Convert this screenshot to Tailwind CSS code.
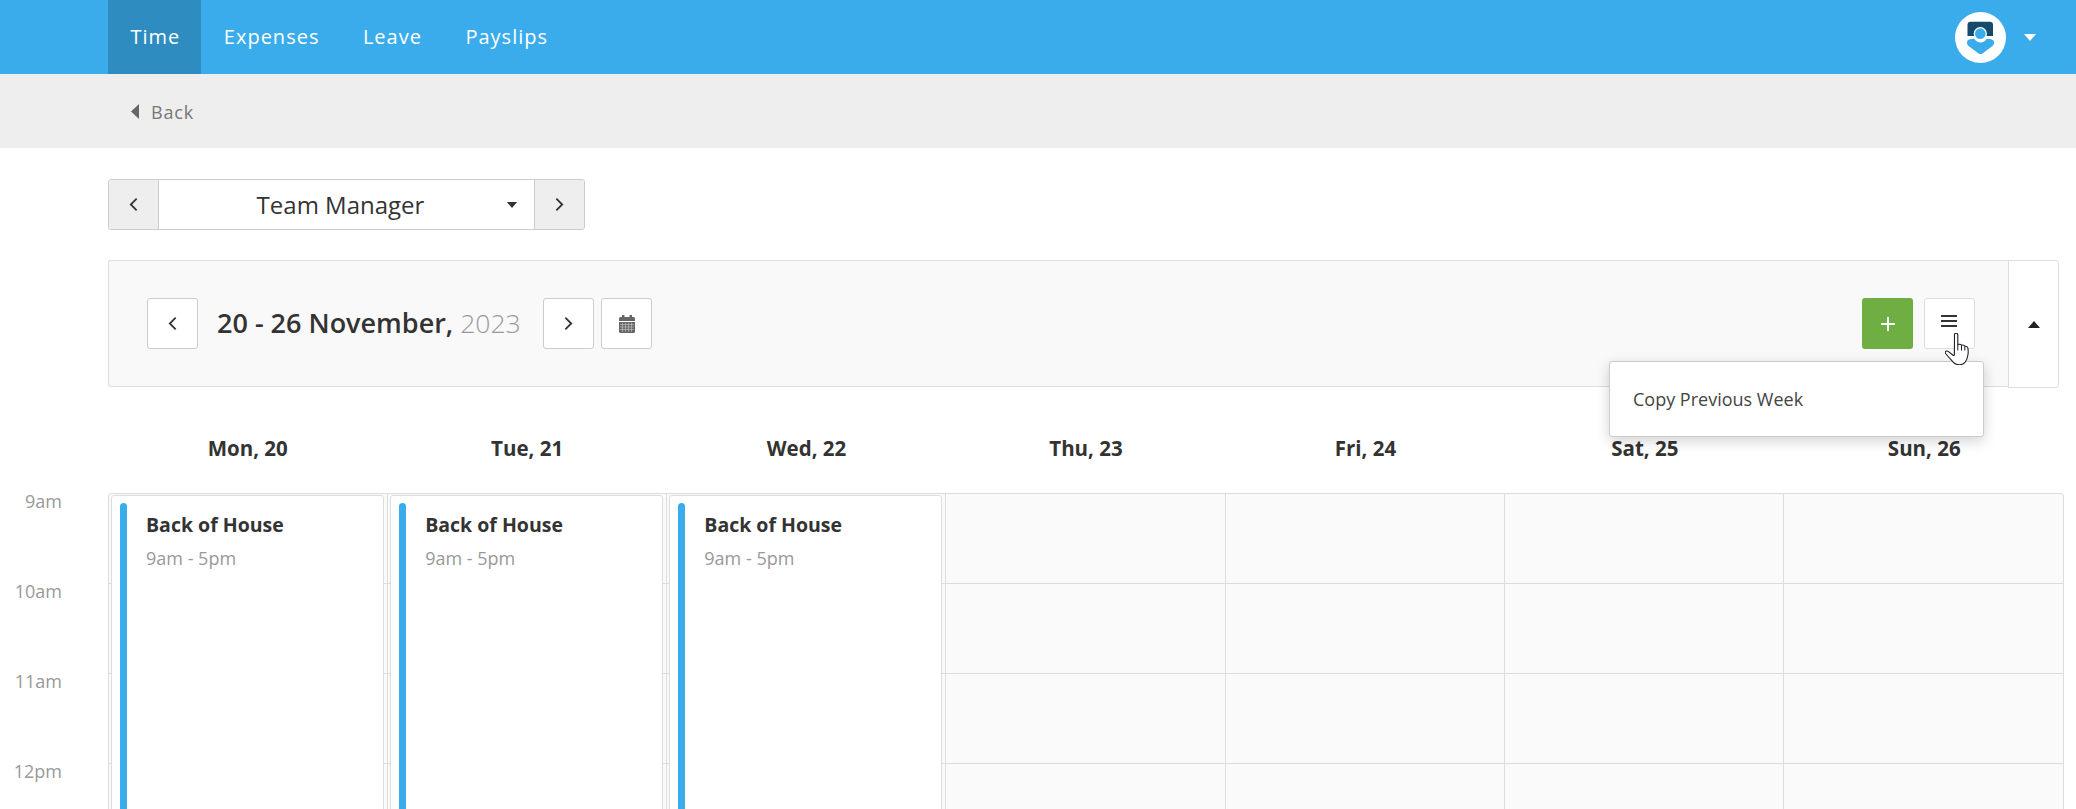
<!DOCTYPE html>
<html lang="en">

<head>
  <meta charset="UTF-8">
  <title>Time</title>
  <script src="https://cdn.jsdelivr.net/npm/@tailwindcss/browser@4"></script>
</head>

<body class="bg-white font-['Open_Sans',sans-serif] text-[#333]">
  <div class="h-[809px] overflow-hidden">
  <!-- top nav -->
  <header class="h-[74px] bg-[#3aaceb] pl-[108px] pr-[40px] flex items-center justify-between">
    <nav class="flex h-full text-[20px] tracking-[1px] text-white">
      <a class="flex items-center pl-[22.5px] pr-[21px] bg-[#2e8cc0]">Time</a>
      <a class="flex items-center pl-[22.5px] pr-[21px]">Expenses</a>
      <a class="flex items-center pl-[22.5px] pr-[21px]">Leave</a>
      <a class="flex items-center pl-[22.5px] pr-[21px]">Payslips</a>
    </nav>
    <div class="flex items-center gap-[18px]">
      <div class="w-[51px] h-[51px] rounded-full bg-white">
        <svg viewBox="0 0 51 51" class="w-[51px] h-[51px]">
          <path d="M12.5 24V13q0-3.300 3.300-3.300h19q3.200 0 3.200 3.300v11z" fill="#164a68" />
          <path d="M12.500 28.500q3-2.500 7-1.500a7 7 0 0 0 12 0q4-1 7 1.500q1.500 3-1 5.500l-10 7.500q-2 1.200-4 0l-10-7.500q-2.500-2.500-1-5.500z" fill="#3aaceb" />
          <circle cx="25.300" cy="21.700" r="6" fill="#3aaceb" stroke="#fff" stroke-width="1.300" />
        </svg>
      </div>
      <svg viewBox="0 0 12 7" class="w-[12px] h-[7px]"><path d="M0 0h12L6 7z" fill="#fff" /></svg>
    </div>
  </header>

  <!-- back bar -->
  <div class="h-[74px] bg-[#eee] pl-[131px] pt-[2px] flex items-center gap-[12px] text-[18px] tracking-[0.8px] text-[#777]">
    <svg viewBox="0 0 8 15" class="w-[8px] h-[15px] mb-[2px]"><path d="M8 0v15L0 7.500z" fill="#666" /></svg>
    <span>Back</span>
  </div>

  <main class="pl-[108px] pr-[12px]">
    <!-- role picker -->
    <div class="mt-[31px] w-[477px] h-[51px] flex border border-[#ccc] rounded-[3px] overflow-hidden">
      <button class="w-[50px] bg-[#eee] border-r border-[#ccc] flex items-center justify-center">
        <svg viewBox="0 0 10 16" class="w-[9px] h-[15px]"><path d="M8.500 1.500L2 8l6.500 6.500" fill="none" stroke="#333" stroke-width="2" /></svg>
      </button>
      <div class="relative flex-1 flex items-center justify-center text-[24px] pr-[12px]">
        Team Manager
        <svg viewBox="0 0 12 7" class="absolute right-[16px] top-[22px] w-[12px] h-[6px]"><path d="M0 0h12L6 7z" fill="#333" /></svg>
      </div>
      <button class="w-[50px] bg-[#eee] border-l border-[#ccc] flex items-center justify-center">
        <svg viewBox="0 0 10 16" class="w-[9px] h-[15px]"><path d="M1.500 1.500L8 8l-6.500 6.500" fill="none" stroke="#333" stroke-width="2" /></svg>
      </button>
    </div>

    <!-- week toolbar -->
    <div class="relative mt-[30px] h-[128px] mr-[5px] flex">
      <div class="flex-1 h-[127px] bg-[#f9f9f9] border border-[#ddd] border-r-0 rounded-l-[3px] pl-[38px] pr-[33px] flex items-center">
        <button class="w-[51px] h-[51px] bg-white border border-[#ccc] rounded-[3px] flex items-center justify-center">
          <svg viewBox="0 0 10 16" class="w-[9px] h-[15px]"><path d="M8.500 1.500L2 8l6.500 6.500" fill="none" stroke="#333" stroke-width="2" /></svg>
        </button>
        <h2 class="ml-[19px] w-[326px] text-[27px] font-semibold whitespace-nowrap">20 - 26 November, <span class="text-[26.500px] font-light text-[#999]">2023</span></h2>
        <button class="w-[51px] h-[51px] bg-white border border-[#ccc] rounded-[3px] flex items-center justify-center">
          <svg viewBox="0 0 10 16" class="w-[9px] h-[15px]"><path d="M1.500 1.500L8 8l-6.500 6.500" fill="none" stroke="#333" stroke-width="2" /></svg>
        </button>
        <button class="ml-[7px] w-[51px] h-[51px] bg-white border border-[#ccc] rounded-[3px] flex items-center justify-center">
          <svg viewBox="0 0 16 18" class="w-[16px] h-[18px]">
            <path d="M0 3.500q0-1.500 1.500-1.500H3V0h2.500v2h5V0H13v2h1.500Q16 2 16 3.500V6H0z" fill="#666" />
            <path d="M0 7h16v9.500q0 1.500-1.500 1.500h-13Q0 18 0 16.500z" fill="#666" />
            <path d="M1 9.500h14M1 12h14M1 14.500h14M3.500 7.500v9.500M6.500 7.500v9.500M9.500 7.500v9.500M12.500 7.500v9.500" stroke="#bbb" stroke-width="0.700" />
          </svg>
        </button>
        <button class="ml-auto w-[51px] h-[51px] bg-[#6fae43] rounded-[3px] flex items-center justify-center">
          <svg viewBox="0 0 14 14" class="w-[14px] h-[14px]"><path d="M7 0v14M0 7h14" stroke="#fff" stroke-width="2" /></svg>
        </button>
        <button class="ml-[11px] w-[51px] h-[51px] bg-white border border-[#ddd] rounded-[3px] flex items-center justify-center pb-[5px] pr-[2px]">
          <svg viewBox="0 0 16 12" class="w-[16px] h-[12px]"><path d="M0 1h16M0 6h16M0 11h16" stroke="#333" stroke-width="2" /></svg>
        </button>
      </div>
      <button class="w-[51px] bg-white border border-[#ddd] rounded-r-[3px] flex items-center justify-center">
        <svg viewBox="0 0 12 7" class="w-[12px] h-[7px]"><path d="M0 7h12L6 0z" fill="#222" /></svg>
      </button>

      <!-- open menu -->
      <div class="absolute z-20 left-[1501px] top-[101px] w-[375px] h-[76px] bg-white border border-[#ccc] rounded-[3px] shadow-[0_4px_14px_rgba(0,0,0,0.18)] flex items-center pl-[23px] text-[18px] text-[#444]">
        Copy Previous Week
      </div>
      <!-- mouse pointer -->
      <svg viewBox="0 0 26 32" class="absolute z-30 left-[1837px] top-[73px] w-[26px] h-[32px]">
        <path d="M9.500 2q0-1.800 1.600-1.800T12.800 2v9.500q2.800-.9 3.700.8 2.500-.8 3.300 1 2.300-.4 2.900 1.400.9 3 .2 7.300-.6 4-2.600 7-1.800 2.500-5.500 2.800-4 .1-6.400-2.500L1 21q-1.400-1.700-.2-2.700 1.300-.9 3 .5l4.200 3.400q1.100.5 1.400-.4z" fill="#fff" stroke="#1d1d2b" stroke-width="1.100" stroke-linejoin="round" />
        <path d="M12.800 11.500v6M16.500 12.300v5.200M19.800 13.300v4.200" stroke="#1d1d2b" stroke-width="1" fill="none" />
      </svg>
    </div>

    <!-- day headings -->
    <div class="grid grid-cols-7 pt-[47px] h-[105px] text-center text-[20.500px] leading-[26px] font-bold">
      <div>Mon, 20</div>
      <div>Tue, 21</div>
      <div>Wed, 22</div>
      <div>Thu, 23</div>
      <div>Fri, 24</div>
      <div>Sat, 25</div>
      <div>Sun, 26</div>
    </div>

    <!-- week grid -->
    <div class="relative">
      <div class="absolute left-[-108px] top-[-3px] w-[62px] text-right text-[18px] leading-[22px] text-[#999]">
        <div class="h-[90px]">9am</div>
        <div class="h-[90px]">10am</div>
        <div class="h-[90px]">11am</div>
        <div class="h-[90px]">12pm</div>
      </div>
      <div class="grid grid-cols-7 border border-[#ddd] rounded-t-[3px] bg-[#fafafa] overflow-hidden">
        <div class="relative border-r border-[#ddd]">
          <div class="h-[90px] border-b border-[#ddd]"></div>
          <div class="h-[90px] border-b border-[#ddd]"></div>
          <div class="h-[90px] border-b border-[#ddd]"></div>
          <div class="h-[90px]"></div>
          <div class="absolute left-[2px] right-[3px] top-[1px] h-[720px] bg-white border border-[#ddd] rounded-[3px] pl-[34px]">
            <span class="absolute left-[8px] top-[7px] bottom-0 w-[7px] rounded-t-full bg-[#3aaceb]"></span>
            <div class="pt-[16px] text-[19.500px] leading-[26px] font-bold">Back of House</div>
            <div class="mt-[8px] text-[18px] leading-[24px] text-[#999]">9am - 5pm</div>
          </div>
        </div>
        <div class="relative border-r border-[#ddd]">
          <div class="h-[90px] border-b border-[#ddd]"></div>
          <div class="h-[90px] border-b border-[#ddd]"></div>
          <div class="h-[90px] border-b border-[#ddd]"></div>
          <div class="h-[90px]"></div>
          <div class="absolute left-[2px] right-[3px] top-[1px] h-[720px] bg-white border border-[#ddd] rounded-[3px] pl-[34px]">
            <span class="absolute left-[8px] top-[7px] bottom-0 w-[7px] rounded-t-full bg-[#3aaceb]"></span>
            <div class="pt-[16px] text-[19.500px] leading-[26px] font-bold">Back of House</div>
            <div class="mt-[8px] text-[18px] leading-[24px] text-[#999]">9am - 5pm</div>
          </div>
        </div>
        <div class="relative border-r border-[#ddd]">
          <div class="h-[90px] border-b border-[#ddd]"></div>
          <div class="h-[90px] border-b border-[#ddd]"></div>
          <div class="h-[90px] border-b border-[#ddd]"></div>
          <div class="h-[90px]"></div>
          <div class="absolute left-[2px] right-[3px] top-[1px] h-[720px] bg-white border border-[#ddd] rounded-[3px] pl-[34px]">
            <span class="absolute left-[8px] top-[7px] bottom-0 w-[7px] rounded-t-full bg-[#3aaceb]"></span>
            <div class="pt-[16px] text-[19.500px] leading-[26px] font-bold">Back of House</div>
            <div class="mt-[8px] text-[18px] leading-[24px] text-[#999]">9am - 5pm</div>
          </div>
        </div>
        <div class="border-r border-[#ddd]">
          <div class="h-[90px] border-b border-[#ddd]"></div>
          <div class="h-[90px] border-b border-[#ddd]"></div>
          <div class="h-[90px] border-b border-[#ddd]"></div>
          <div class="h-[90px]"></div>
        </div>
        <div class="border-r border-[#ddd]">
          <div class="h-[90px] border-b border-[#ddd]"></div>
          <div class="h-[90px] border-b border-[#ddd]"></div>
          <div class="h-[90px] border-b border-[#ddd]"></div>
          <div class="h-[90px]"></div>
        </div>
        <div class="border-r border-[#ddd]">
          <div class="h-[90px] border-b border-[#ddd]"></div>
          <div class="h-[90px] border-b border-[#ddd]"></div>
          <div class="h-[90px] border-b border-[#ddd]"></div>
          <div class="h-[90px]"></div>
        </div>
        <div>
          <div class="h-[90px] border-b border-[#ddd]"></div>
          <div class="h-[90px] border-b border-[#ddd]"></div>
          <div class="h-[90px] border-b border-[#ddd]"></div>
          <div class="h-[90px]"></div>
        </div>
      </div>
    </div>
  </main>
  </div>
</body>

</html>
